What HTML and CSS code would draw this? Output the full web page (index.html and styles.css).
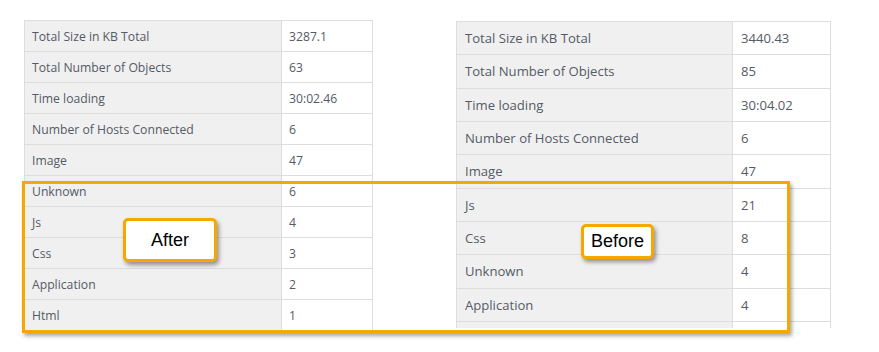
FILE: index.html
```html
<!DOCTYPE html>
<html>
<head>
<meta charset="utf-8">
<link rel="stylesheet" href="styles.css">
</head>
<body>
<div class="page">
  <div class="panel panel-after">
    <table class="stats">
      <tr><td class="k">Total Size in KB Total</td><td class="v">3287.1</td></tr>
      <tr><td class="k">Total Number of Objects</td><td class="v">63</td></tr>
      <tr><td class="k">Time loading</td><td class="v">30:02.46</td></tr>
      <tr><td class="k">Number of Hosts Connected</td><td class="v">6</td></tr>
      <tr><td class="k">Image</td><td class="v">47</td></tr>
      <tr><td class="k">Unknown</td><td class="v">6</td></tr>
      <tr><td class="k">Js</td><td class="v">4</td></tr>
      <tr><td class="k">Css</td><td class="v">3</td></tr>
      <tr><td class="k">Application</td><td class="v">2</td></tr>
      <tr><td class="k">Html</td><td class="v">1</td></tr>
    </table>
  </div>
  <div class="panel panel-before">
    <table class="stats">
      <tr><td class="k">Total Size in KB Total</td><td class="v">3440.43</td></tr>
      <tr><td class="k">Total Number of Objects</td><td class="v">85</td></tr>
      <tr><td class="k">Time loading</td><td class="v">30:04.02</td></tr>
      <tr><td class="k">Number of Hosts Connected</td><td class="v">6</td></tr>
      <tr><td class="k">Image</td><td class="v">47</td></tr>
      <tr><td class="k">Js</td><td class="v">21</td></tr>
      <tr><td class="k">Css</td><td class="v">8</td></tr>
      <tr><td class="k">Unknown</td><td class="v">4</td></tr>
      <tr><td class="k">Application</td><td class="v">4</td></tr>
      <tr><td class="k"></td><td class="v"></td></tr>
    </table>
  </div>
</div>
<div class="highlight"></div>
<div class="tag tag-after">After</div>
<div class="tag tag-before">Before</div>
</body>
</html>
```

FILE: styles.css
```css
html, body {
  margin: 0;
  padding: 0;
  background: #ffffff;
  width: 879px;
  height: 352px;
  overflow: hidden;
  position: relative;
}

.page {
  display: flex;
  align-items: flex-start;
  padding: 20px 0 0 24px;
}

.panel {
  overflow: hidden;
}

.panel-after {
  width: 349px;
}

.panel-before {
  width: 375px;
  height: 307px;
  margin-left: 83px;
  margin-top: 1px;
}

.stats {
  border-collapse: collapse;
  width: 100%;
  font-family: "Open Sans", "DejaVu Sans", sans-serif;
  color: #555b66;
}

.stats td {
  border: 1px solid #dddddd;
  padding: 0 0 0 7px;
  white-space: nowrap;
}

.stats td.k {
  background: #f0f0f0;
}

.stats td.v {
  background: #ffffff;
}

.panel-after .stats {
  font-size: 12.2px;
}

.panel-after .stats td {
  height: 30px;
}

.panel-after .stats td.k {
  width: 249px;
}

.panel-before .stats {
  font-size: 13.1px;
}

.panel-before .stats td {
  height: 32.33px;
  padding-left: 8px;
}

.panel-before .stats td.k {
  width: 267px;
}

.highlight {
  position: absolute;
  left: 22px;
  top: 181px;
  width: 762px;
  height: 146px;
  border: 3px solid #f7a800;
  box-shadow: 2px 3px 4px rgba(0, 0, 0, 0.35);
}

.tag {
  position: absolute;
  box-sizing: border-box;
  background: #ffffff;
  border: 3px solid #f7a800;
  border-radius: 5px;
  box-shadow: 2px 3px 4px rgba(0, 0, 0, 0.4);
  font-family: "Liberation Sans", Arial, sans-serif;
  font-size: 18px;
  color: #000000;
  display: flex;
  align-items: center;
  justify-content: center;
}

.tag-after {
  left: 123px;
  top: 218px;
  width: 94px;
  height: 44px;
}

.tag-before {
  left: 581px;
  top: 224px;
  width: 73px;
  height: 35px;
}
```
